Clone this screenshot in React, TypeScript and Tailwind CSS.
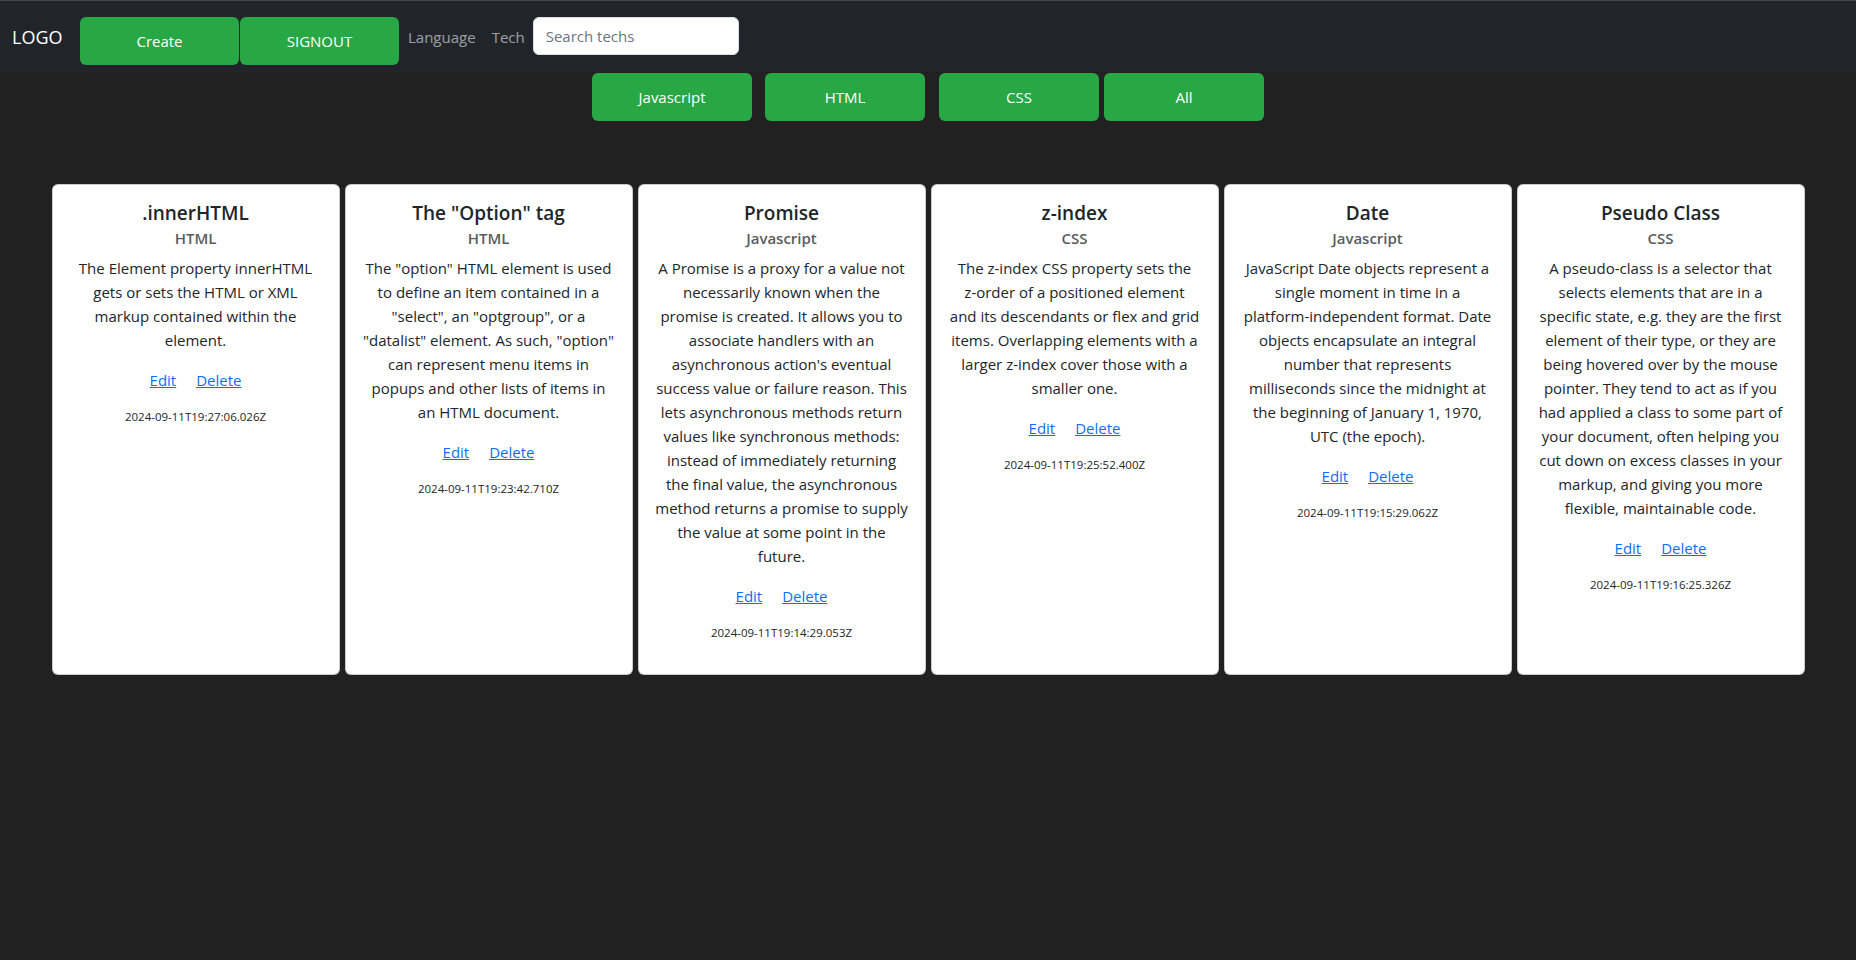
import React from "react";

type Tech = { title: string; lang: string; body: string[]; created: string };

// body lines kept as they break in the original card layout
const techs: Tech[] = [
  {
    title: ".innerHTML",
    lang: "HTML",
    body: [
      "The Element property innerHTML",
      "gets or sets the HTML or XML",
      "markup contained within the",
      "element.",
    ],
    created: "2024-09-11T19:27:06.026Z",
  },
  {
    title: 'The "Option" tag',
    lang: "HTML",
    body: [
      'The "option" HTML element is used',
      "to define an item contained in a",
      '"select", an "optgroup", or a',
      '"datalist" element. As such, "option"',
      "can represent menu items in",
      "popups and other lists of items in",
      "an HTML document.",
    ],
    created: "2024-09-11T19:23:42.710Z",
  },
  {
    title: "Promise",
    lang: "Javascript",
    body: [
      "A Promise is a proxy for a value not",
      "necessarily known when the",
      "promise is created. It allows you to",
      "associate handlers with an",
      "asynchronous action's eventual",
      "success value or failure reason. This",
      "lets asynchronous methods return",
      "values like synchronous methods:",
      "instead of immediately returning",
      "the final value, the asynchronous",
      "method returns a promise to supply",
      "the value at some point in the",
      "future.",
    ],
    created: "2024-09-11T19:14:29.053Z",
  },
  {
    title: "z-index",
    lang: "CSS",
    body: [
      "The z-index CSS property sets the",
      "z-order of a positioned element",
      "and its descendants or flex and grid",
      "items. Overlapping elements with a",
      "larger z-index cover those with a",
      "smaller one.",
    ],
    created: "2024-09-11T19:25:52.400Z",
  },
  {
    title: "Date",
    lang: "Javascript",
    body: [
      "JavaScript Date objects represent a",
      "single moment in time in a",
      "platform-independent format. Date",
      "objects encapsulate an integral",
      "number that represents",
      "milliseconds since the midnight at",
      "the beginning of January 1, 1970,",
      "UTC (the epoch).",
    ],
    created: "2024-09-11T19:15:29.062Z",
  },
  {
    title: "Pseudo Class",
    lang: "CSS",
    body: [
      "A pseudo-class is a selector that",
      "selects elements that are in a",
      "specific state, e.g. they are the first",
      "element of their type, or they are",
      "being hovered over by the mouse",
      "pointer. They tend to act as if you",
      "had applied a class to some part of",
      "your document, often helping you",
      "cut down on excess classes in your",
      "markup, and giving you more",
      "flexible, maintainable code.",
    ],
    created: "2024-09-11T19:16:25.326Z",
  },
];

const greenBtn = "h-12 rounded-md bg-[#28a745] text-[15px] text-white";

function TechCard({ tech }: { tech: Tech }) {
  return (
    <div className="w-[288px] shrink-0 rounded-md border border-black/20 bg-white p-4 text-center text-[#212529]">
      <h5 className="mb-2 text-[19px] font-semibold leading-6">{tech.title}</h5>
      <h6 className="-mt-1 mb-2 text-[15px] font-semibold leading-[19px] text-[#595c5f]">{tech.lang}</h6>
      <p className="mb-4 whitespace-pre text-[15px] leading-6">{tech.body.join("\n")}</p>
      <div className="mb-4 text-[15px] leading-6">
        <a href="#" className="mx-2 text-[#0d6efd] underline">Edit</a>{" "}
        <a href="#" className="mx-2 text-[#0d6efd] underline">Delete</a>
      </div>
      <p className="mb-4 text-[11.5px] leading-[18px]">{tech.created}</p>
    </div>
  );
}

export default function App() {
  return (
    <div className="min-h-screen bg-[#212121] font-['Open_Sans',sans-serif]">
      <nav className="flex h-[72px] items-start border-t border-[#45484c] bg-[#212529] pt-4">
        <a href="#" className="ml-3 w-[68px] text-[18px] leading-[41px] text-white">LOGO</a>
        <div className="flex gap-px">
          <button className={`${greenBtn} w-[159px]`}>Create</button>
          <button className={`${greenBtn} w-[159px]`}>SIGNOUT</button>
        </div>
        <a href="#" className="pl-[9px] pr-2 text-[15px] leading-[40px] text-white/55">Language</a>
        <a href="#" className="px-2 text-[15px] leading-[40px] text-white/55">Tech</a>
        <input
          placeholder="Search techs"
          className="h-[38px] w-[206px] rounded-md border border-[#dee2e6] bg-white px-3 text-[15px] text-[#212529] placeholder:text-[#6c757d] outline-none"
        />
      </nav>

      <div className="mt-px flex justify-center">
        <button className={`${greenBtn} w-40`}>Javascript</button>
        <button className={`${greenBtn} ml-[13px] w-40`}>HTML</button>
        <button className={`${greenBtn} ml-[14px] w-40`}>CSS</button>
        <button className={`${greenBtn} ml-[5px] w-40`}>All</button>
      </div>

      <div className="mt-[63px] flex justify-center gap-[5px]">
        {techs.map((t) => (
          <TechCard key={t.created} tech={t} />
        ))}
      </div>
    </div>
  );
}
